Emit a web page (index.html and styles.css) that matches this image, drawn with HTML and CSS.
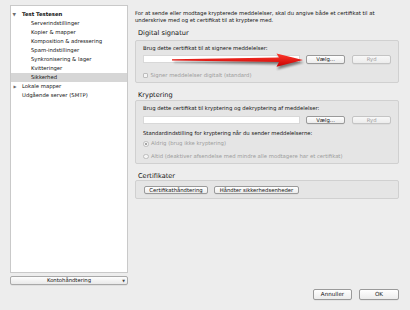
FILE: index.html
```html
<!DOCTYPE html>
<html lang="da">
<head>
<meta charset="utf-8">
<link rel="stylesheet" href="styles.css">
</head>
<body>
<div class="window">
  <aside class="sidebar">
    <ul class="tree">
      <li class="row account"><span class="tri down">▼</span>Test Testesen</li>
      <li class="row child">Serverindstillinger</li>
      <li class="row child">Kopier &amp; mapper</li>
      <li class="row child">Komposition &amp; adressering</li>
      <li class="row child">Spam-indstillinger</li>
      <li class="row child">Synkronisering &amp; lager</li>
      <li class="row child">Kvitteringer</li>
      <li class="row child selected">Sikkerhed</li>
      <li class="row top"><span class="tri right">▶</span>Lokale mapper</li>
      <li class="row top">Udgående server (SMTP)</li>
    </ul>
    <div class="popup"><span class="popup-label">Kontohåndtering</span><span class="popup-arrow">▼</span></div>
  </aside>
  <main class="content">
    <p class="intro">For at sende eller modtage krypterede meddelelser, skal du angive både et certifikat til at underskrive med og et certifikat til at kryptere med.</p>

    <h2 class="heading">Digital signatur</h2>
    <section class="group g-sign">
      <div class="label">Brug dette certifikat til at signere meddelelser:</div>
      <div class="field-row">
        <div class="input"></div>
        <button class="btn">Vælg...</button>
        <button class="btn disabled">Ryd</button>
      </div>
      <div class="option check-row"><span class="checkbox"></span>Signer meddelelser digitalt (standard)</div>
    </section>

    <h2 class="heading after">Kryptering</h2>
    <section class="group g-enc">
      <div class="label">Brug dette certifikat til kryptering og dekryptering af meddelelser:</div>
      <div class="field-row">
        <div class="input"></div>
        <button class="btn">Vælg...</button>
        <button class="btn disabled">Ryd</button>
      </div>
      <div class="label std">Standardindstilling for kryptering når du sender meddelelserne:</div>
      <div class="option radio-1"><span class="radio on"></span>Aldrig (brug ikke kryptering)</div>
      <div class="option radio-2"><span class="radio"></span>Altid (deaktiver afsendelse med mindre alle modtagere har et certifikat)</div>
    </section>

    <h2 class="heading after last">Certifikater</h2>
    <section class="group g-cert">
      <button class="btn cert-1">Certifikathåndtering</button>
      <button class="btn cert-2">Håndter sikkerhedsenheder</button>
    </section>

    <footer class="footer">
      <button class="btn big annuller">Annuller</button>
      <button class="btn big ok">OK</button>
    </footer>
  </main>
</div>
<svg class="arrow" width="410" height="310" viewBox="0 0 410 310">
  <defs>
    <filter id="sh" x="-20%" y="-50%" width="140%" height="200%">
      <feGaussianBlur stdDeviation="1.3"/>
    </filter>
    <linearGradient id="rg" x1="0" y1="0" x2="0" y2="1">
      <stop offset="0" stop-color="#ff3a2e"/>
      <stop offset="1" stop-color="#c80000"/>
    </linearGradient>
  </defs>
  <polygon points="174,61.6 280,60 277,56 304,62.5 277,69.5 280,64.5 174,62.6" fill="#000" opacity="0.45" filter="url(#sh)"/>
  <polygon points="172,59.2 279,57.6 276.5,53.5 303,60 276.5,66.8 279,62 172,60.4" fill="url(#rg)"/>
</svg>
</body>
</html>
```
FILE: styles.css
```css
* { box-sizing: border-box; }
html, body { margin: 0; padding: 0; }
body {
  width: 410px;
  height: 310px;
  background: #ededed;
  font-family: "DejaVu Sans", "Lucida Grande", sans-serif;
  font-size: 5.3px;
  color: #111;
  overflow: hidden;
}
.window {
  display: flex;
  height: 310px;
  gap: 7px;
}
.sidebar {
  width: 128px;
  padding: 5px 0 0 10px;
  display: flex;
  flex-direction: column;
}
.tree {
  list-style: none;
  margin: 0;
  padding: 3.5px 0 0 0;
  height: 268px;
  background: #fff;
  border: 1px solid #c9c9c9;
}
.row {
  height: 9.1px;
  line-height: 9.1px;
  white-space: nowrap;
  position: relative;
}
.account { padding-left: 11px; font-weight: bold; }
.child { padding-left: 20px; }
.top { padding-left: 11px; }
.selected { background: #d6d6d6; }
.tri {
  position: absolute;
  left: 1.5px;
  color: #6e6e6e;
  font-size: 4.5px;
}
.tri.right { left: 2.5px; font-size: 4px; }
.popup {
  margin-top: 3px;
  height: 9px;
  border: 1px solid #a9a9a9;
  border-radius: 2px;
  background: linear-gradient(#fdfdfd, #e9e9e9);
  display: flex;
  align-items: center;
  position: relative;
  box-shadow: 0 0.5px 0 rgba(0,0,0,0.1);
}
.popup-label { flex: 1; text-align: center; line-height: 7px; }
.popup-arrow { position: absolute; right: 2px; font-size: 3.5px; color: #444; }

.content {
  width: 264px;
  display: flex;
  flex-direction: column;
  padding-top: 10px;
}
.intro { margin: 0; line-height: 7px; }
.heading {
  margin: 5.3px 0 2.7px 3px;
  font-size: 6.6px;
  font-weight: normal;
  line-height: 8px;
  color: #111;
}
.heading.after { margin: 8px 0 1px 3px; }
.heading.last { margin: 8px 0 0 3px; }
.group {
  background: #e5e5e5;
  border: 1px solid #d0d0d0;
  border-radius: 2px;
  padding: 4px 7px 3px 7px;
}
.label { line-height: 7px; height: 7px; }
.field-row {
  display: flex;
  align-items: center;
  height: 9px;
  margin-top: 3px;
}
.input {
  width: 158px;
  height: 8px;
  background: #fff;
  border: 0.5px solid #d8d8d8;
}
.btn {
  font-family: inherit;
  font-size: 5.3px;
  color: #111;
  height: 8.5px;
  padding: 0;
  line-height: 7px;
  border: 1px solid #9a9a9a;
  border-radius: 2px;
  background: linear-gradient(#ffffff, #ececec);
  box-shadow: 0 0.5px 0 rgba(0,0,0,0.08);
}
.field-row .btn { width: 40px; margin-left: 6px; }
.field-row .btn.disabled { width: 39px; margin-left: 7px; }
.btn.disabled { color: #9d9d9d; border-color: #c4c4c4; background: linear-gradient(#f8f8f8, #ececec); }
.option {
  display: flex;
  align-items: center;
  line-height: 7px;
  height: 7px;
  color: #9b9b9b;
}
.check-row { margin-top: 8.5px; }
.std { margin-top: 6px; }
.radio-1 { margin-top: 3px; }
.radio-2 { margin-top: 5.5px; }
.checkbox {
  width: 5px; height: 5px;
  border: 0.7px solid #bdbdbd;
  border-radius: 1px;
  background: #f4f4f4;
  margin-right: 2.5px;
}
.radio {
  width: 5.5px; height: 5.5px;
  border: 0.7px solid #bdbdbd;
  border-radius: 50%;
  background: #f4f4f4;
  margin-right: 2.5px;
  display: flex; align-items: center; justify-content: center;
}
.radio.on::after {
  content: "";
  width: 2px; height: 2px;
  border-radius: 50%;
  background: #8a8a8a;
}
.g-cert {
  display: flex;
  gap: 6px;
  padding: 5px 7px 4px 8px;
}
.cert-1 { width: 64px; }
.cert-2 { width: 85px; }
.footer {
  margin-top: auto;
  display: flex;
  justify-content: flex-end;
  gap: 7px;
  padding: 0 0 10px 0;
}
.btn.big { height: 11px; font-size: 5.6px; }
.annuller { width: 39px; }
.ok { width: 40px; }
.arrow {
  position: absolute;
  left: 0; top: 0;
  pointer-events: none;
}
```
